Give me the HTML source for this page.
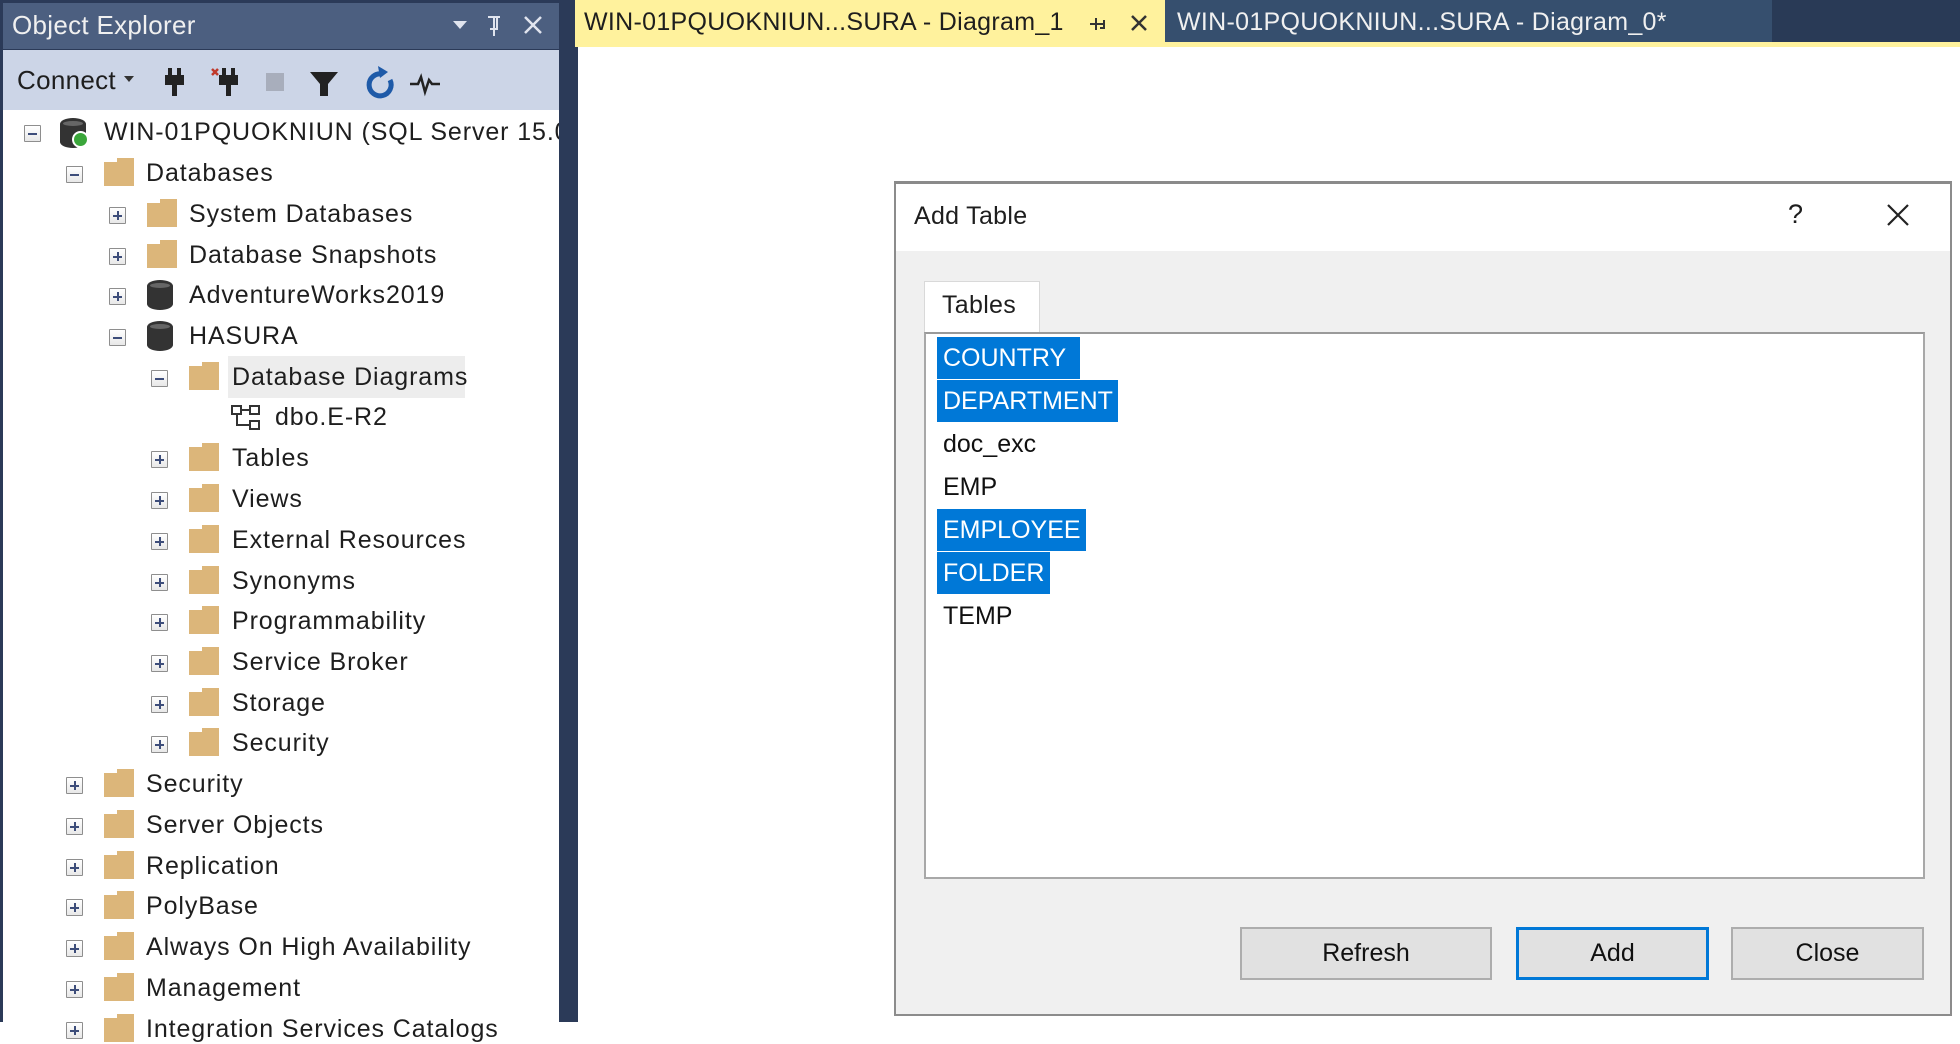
<!DOCTYPE html>
<html><head><meta charset="utf-8"><style>
*{margin:0;padding:0;box-sizing:border-box}
body{width:1960px;height:1022px;overflow:hidden;background:#fff;font-family:"Liberation Sans",sans-serif;position:relative}
.a{position:absolute}
.t{position:absolute;font-size:25px;color:#1e1e1e;white-space:nowrap;line-height:30px;letter-spacing:0.9px}
.ex{position:absolute;width:17px;height:17px;border:1px solid #8e8e8e;background:linear-gradient(#fff,#e8e8e8);border-radius:1px}
.ex:before{content:"";position:absolute;left:3px;top:7px;width:9px;height:2px;background:#3d4d7a}
.ex.p:after{content:"";position:absolute;left:7px;top:3px;width:2px;height:9px;background:#3d4d7a}
.f{position:absolute;width:30px;height:24px;background:#dcb67a}
.f:before{content:"";position:absolute;right:0;top:-4px;width:17px;height:4px;background:#dcb67a}
.db{position:absolute;width:26px;height:30px;background:#333;border-radius:13px/6px}
.db:before{content:"";position:absolute;left:3px;top:3px;width:20px;height:5px;border-radius:50%;background:#666}
.li{position:absolute;left:937px;height:42px;font-size:25px;line-height:42px;padding-left:6px;color:#111;white-space:nowrap}
.sel{background:#0078d7;color:#fff}
.btn{position:absolute;top:927px;height:53px;background:#e1e1e1;border:2px solid #adadad;font-size:25px;text-align:center;line-height:49px;color:#111}
</style></head><body>
<div class="a" style="left:0;top:0;width:575px;height:1022px;background:#2b3a58"></div>
<div class="a" style="left:3px;top:3px;width:556px;height:46px;background:#4c5f80"></div>
<div class="t" style="left:12px;top:10px;color:#f0f0f0;font-size:26px;letter-spacing:0.3px">Object Explorer</div>
<svg class="a" style="left:450px;top:14px" width="100" height="24"><path d="M3 7h14l-7 8z" fill="#e0e4ee"/><path d="M44 3v12M38 3h12M40 15h8M44 15v7M47 4v10" stroke="#e0e4ee" stroke-width="2" fill="none"/><path d="M75 3l16 16M91 3l-16 16" stroke="#e0e4ee" stroke-width="2.5"/></svg>
<div class="a" style="left:3px;top:50px;width:556px;height:60px;background:#ccd5e7"></div>
<div class="t" style="left:17px;top:65px;font-size:26px;color:#1e1e1e;letter-spacing:0.3px">Connect</div>
<svg class="a" style="left:120px;top:60px" width="330" height="42"><path d="M4 16h10l-5 6z" fill="#333"/>
<g fill="#222"><rect x="48" y="8" width="4" height="8"/><rect x="57" y="8" width="4" height="8"/><rect x="45" y="15" width="19" height="10"/><rect x="52" y="24" width="5" height="12"/></g>
<path d="M92 9l6 6M98 9l-6 6" stroke="#c0392b" stroke-width="2.5"/>
<g fill="#222"><rect x="102" y="8" width="4" height="8"/><rect x="111" y="8" width="4" height="8"/><rect x="99" y="15" width="19" height="10"/><rect x="106" y="24" width="5" height="12"/></g>
<rect x="146" y="13" width="18" height="18" fill="#a8aebc"/>
<path d="M190 12h28l-10 12v12h-8v-12z" fill="#222"/>
<path d="M262 14a11 11 0 1 0 8 6" stroke="#1e5aa8" stroke-width="5" fill="none"/><path d="M258 6l10 6-8 6z" fill="#1e5aa8"/>
<path d="M290 24h8l3-7 4 15 4-12 3 4h8" stroke="#222" stroke-width="2.5" fill="none"/></svg>
<div class="a" style="left:3px;top:110px;width:556px;height:912px;background:#fff;overflow:hidden"></div>

<div class="ex" style="left:24px;top:125px"></div>
<div class="db" style="left:60px;top:118px"></div><div class="a" style="left:72px;top:131px;width:17px;height:17px;border-radius:50%;background:#3aa63a;border:2px solid #fff"></div>
<div class="a" style="left:104px;top:117px;width:455px;height:32px;overflow:hidden"><div class="t" style="left:0;top:0">WIN-01PQUOKNIUN (SQL Server 15.0.2000)</div></div>

<div class="ex" style="left:66px;top:166px"></div><div class="f" style="left:104px;top:162px"></div><div class="t" style="left:146px;top:158px">Databases</div>

<div class="ex p" style="left:109px;top:207px"></div><div class="f" style="left:147px;top:203px"></div><div class="t" style="left:189px;top:199px">System Databases</div>
<div class="ex p" style="left:109px;top:248px"></div><div class="f" style="left:147px;top:244px"></div><div class="t" style="left:189px;top:240px">Database Snapshots</div>
<div class="ex p" style="left:109px;top:288px"></div><div class="db" style="left:147px;top:280px"></div><div class="t" style="left:189px;top:280px">AdventureWorks2019</div>
<div class="ex" style="left:109px;top:329px"></div><div class="db" style="left:147px;top:321px"></div><div class="t" style="left:189px;top:321px">HASURA</div>

<div class="a" style="left:228px;top:356px;width:237px;height:42px;background:#ededed"></div>
<div class="ex" style="left:151px;top:370px"></div><div class="f" style="left:189px;top:366px"></div><div class="t" style="left:232px;top:362px">Database Diagrams</div>
<svg class="a" style="left:230px;top:404px" width="32" height="28"><g stroke="#333" stroke-width="2" fill="none"><rect x="2" y="2" width="9" height="8"/><rect x="20" y="2" width="9" height="8"/><rect x="20" y="17" width="9" height="8"/><path d="M11 6h9M7 10v11h13"/></g></svg>
<div class="t" style="left:275px;top:402px">dbo.E-R2</div>

<div class="ex p" style="left:151px;top:451px"></div><div class="f" style="left:189px;top:447px"></div><div class="t" style="left:232px;top:443px">Tables</div>
<div class="ex p" style="left:151px;top:492px"></div><div class="f" style="left:189px;top:488px"></div><div class="t" style="left:232px;top:484px">Views</div>
<div class="ex p" style="left:151px;top:533px"></div><div class="f" style="left:189px;top:529px"></div><div class="t" style="left:232px;top:525px">External Resources</div>
<div class="ex p" style="left:151px;top:574px"></div><div class="f" style="left:189px;top:570px"></div><div class="t" style="left:232px;top:566px">Synonyms</div>
<div class="ex p" style="left:151px;top:614px"></div><div class="f" style="left:189px;top:610px"></div><div class="t" style="left:232px;top:606px">Programmability</div>
<div class="ex p" style="left:151px;top:655px"></div><div class="f" style="left:189px;top:651px"></div><div class="t" style="left:232px;top:647px">Service Broker</div>
<div class="ex p" style="left:151px;top:696px"></div><div class="f" style="left:189px;top:692px"></div><div class="t" style="left:232px;top:688px">Storage</div>
<div class="ex p" style="left:151px;top:736px"></div><div class="f" style="left:189px;top:732px"></div><div class="t" style="left:232px;top:728px">Security</div>

<div class="ex p" style="left:66px;top:777px"></div><div class="f" style="left:104px;top:773px"></div><div class="t" style="left:146px;top:769px">Security</div>
<div class="ex p" style="left:66px;top:818px"></div><div class="f" style="left:104px;top:814px"></div><div class="t" style="left:146px;top:810px">Server Objects</div>
<div class="ex p" style="left:66px;top:859px"></div><div class="f" style="left:104px;top:855px"></div><div class="t" style="left:146px;top:851px">Replication</div>
<div class="ex p" style="left:66px;top:899px"></div><div class="f" style="left:104px;top:895px"></div><div class="t" style="left:146px;top:891px">PolyBase</div>
<div class="ex p" style="left:66px;top:940px"></div><div class="f" style="left:104px;top:936px"></div><div class="t" style="left:146px;top:932px">Always On High Availability</div>
<div class="ex p" style="left:66px;top:981px"></div><div class="f" style="left:104px;top:977px"></div><div class="t" style="left:146px;top:973px">Management</div>
<div class="ex p" style="left:66px;top:1022px"></div><div class="f" style="left:104px;top:1018px"></div><div class="t" style="left:146px;top:1014px">Integration Services Catalogs</div>

<div class="a" style="left:575px;top:0;width:1385px;height:47px;background:#293a56"></div>
<div class="a" style="left:575px;top:0;width:590px;height:47px;background:#fff29d"></div>
<div class="t" style="left:584px;top:7px;font-size:25px;color:#1e1e1e;letter-spacing:0.3px">WIN-01PQUOKNIUN...SURA - Diagram_1</div>
<svg class="a" style="left:1088px;top:13px" width="60" height="22"><path d="M2 11h6M8 5v12M8 11h8M16 7v8h-4" stroke="#333" stroke-width="2" fill="none"/><path d="M44 3l14 14M58 3l-14 14" stroke="#333" stroke-width="2.5"/></svg>
<div class="a" style="left:1165px;top:0;width:607px;height:42px;background:#364f6e"></div>
<div class="t" style="left:1177px;top:7px;font-size:25px;color:#f0f0f0;letter-spacing:0.3px">WIN-01PQUOKNIUN...SURA - Diagram_0*</div>
<div class="a" style="left:575px;top:42px;width:1385px;height:5px;background:#fff29d"></div>
<div class="a" style="left:575px;top:47px;width:1385px;height:975px;background:#fff"></div>
<div class="a" style="left:575px;top:47px;width:3px;height:975px;background:#2b3a58"></div>

<div class="a" style="left:894px;top:181px;width:1058px;height:835px;background:#f0f0f0;border:2px solid #8c8c8c;border-top:3px solid #8a8a8a"></div>
<div class="a" style="left:896px;top:184px;width:1054px;height:67px;background:#fff"></div>
<div class="t" style="left:914px;top:201px;font-size:25px;letter-spacing:0.3px">Add Table</div>
<div class="t" style="left:1788px;top:199px;font-size:27px">?</div>
<svg class="a" style="left:1887px;top:204px" width="22" height="22"><path d="M1 1l20 20M21 1l-20 20" stroke="#222" stroke-width="2.2"/></svg>
<div class="a" style="left:924px;top:281px;width:116px;height:53px;background:#fff;border:1px solid #d9d9d9;border-bottom:none"></div>
<div class="t" style="left:942px;top:290px;font-size:25px;letter-spacing:0.3px">Tables</div>
<div class="a" style="left:924px;top:332px;width:1001px;height:547px;background:#fff;border:2px solid #a8a8a8;border-top-color:#9a9a9a"></div>
<div class="li sel" style="top:337px;width:143px">COUNTRY</div>
<div class="li sel" style="top:380px;width:181px">DEPARTMENT</div>
<div class="li" style="top:423px">doc_exc</div>
<div class="li" style="top:466px">EMP</div>
<div class="li sel" style="top:509px;width:149px">EMPLOYEE</div>
<div class="li sel" style="top:552px;width:113px">FOLDER</div>
<div class="li" style="top:595px">TEMP</div>
<div class="btn" style="left:1240px;width:252px">Refresh</div>
<div class="btn" style="left:1516px;width:193px;border:3px solid #0078d7;line-height:47px">Add</div>
<div class="btn" style="left:1731px;width:193px">Close</div>
</body></html>
